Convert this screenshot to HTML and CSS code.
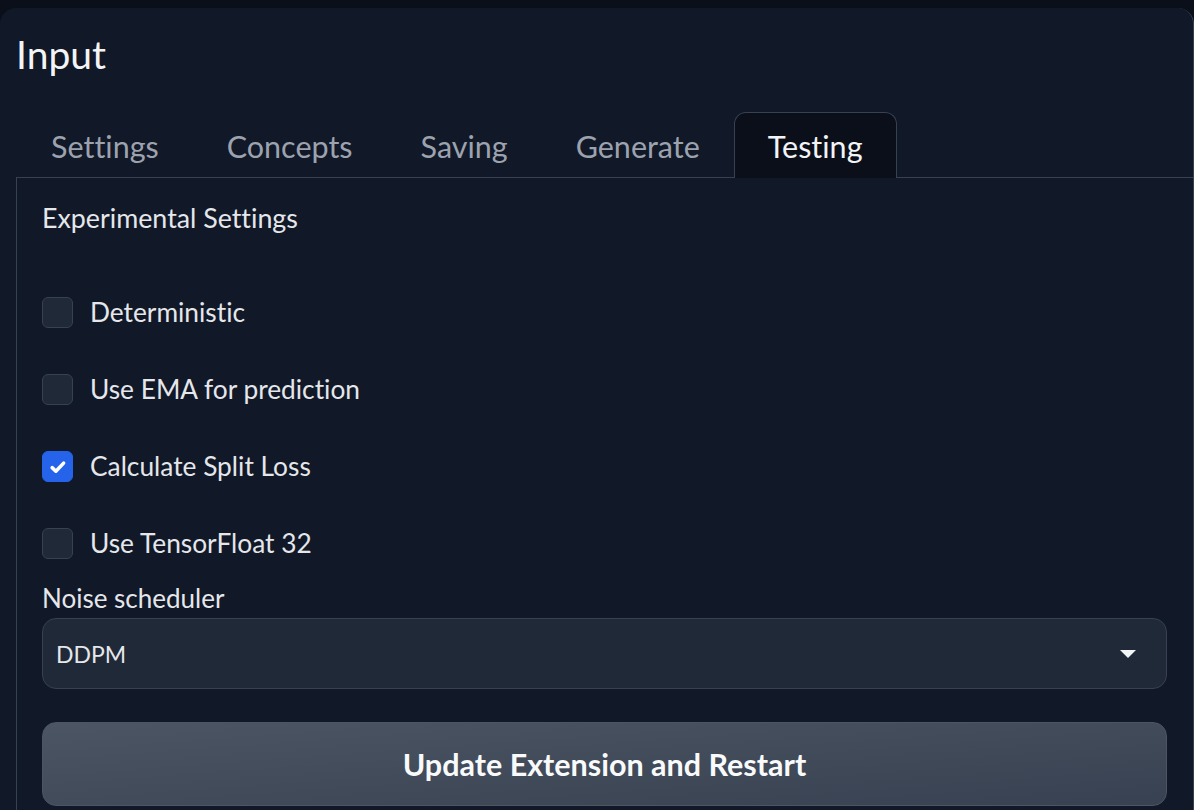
FILE: index.html
```html
<!DOCTYPE html>
<html lang="en">
<head>
    <meta charset="UTF-8">
    <meta name="viewport" content="width=device-width, initial-scale=1.0">
    <title>Input</title>
    <link rel="stylesheet" href="styles.css">
</head>
<body>
    <div class="panel">
        <h1 class="title">Input</h1>
        <div class="tabs">
            <button class="tab">Settings</button>
            <button class="tab">Concepts</button>
            <button class="tab">Saving</button>
            <button class="tab">Generate</button>
            <button class="tab active">Testing</button>
        </div>
        <div class="tab-body">
            <div class="section-title">Experimental Settings</div>
            <div class="checks">
                <label class="check"><span class="box"></span>Deterministic</label>
                <label class="check"><span class="box"></span>Use EMA for prediction</label>
                <label class="check"><span class="box checked">
                    <svg width="20" height="20" viewBox="0 0 16 16"><path d="M3.3 8.5l3 2.9 6.2-6.5" fill="none" stroke="#fff" stroke-width="2.8" stroke-linecap="round" stroke-linejoin="round"/></svg>
                </span>Calculate Split Loss</label>
                <label class="check"><span class="box"></span>Use TensorFloat 32</label>
            </div>
            <div class="field-label">Noise scheduler</div>
            <div class="dropdown">
                <span>DDPM</span>
                <span class="caret"></span>
            </div>
            <button class="update">Update Extension and Restart</button>
        </div>
    </div>
</body>
</html>
```

FILE: styles.css
```css
body {
    margin: 0;
    background: #0b0f19;
    font-family: "Lato", "Noto Sans", sans-serif;
    font-variant-ligatures: none;
    color: #e5e7eb;
    height: 810px;
    overflow: hidden;
}
.panel {
    margin-top: 8px;
    background: #111827;
    border-radius: 16px 16px 0 0;
    border-right: 1px solid #374151;
    height: 802px;
    padding-left: 16px;
}
.title {
    margin: 0;
    padding: 26px 0 0 0;
    font-size: 39px;
    font-weight: 400;
    line-height: 40px;
    color: #f3f4f6;
}
.tabs {
    display: flex;
    margin-top: 38px;
    padding-left: 1px;
}
.tab {
    font-family: inherit;
    font-variant-ligatures: none;
    font-size: 30.5px;
    color: #9ca3af;
    background: none;
    border: 1px solid transparent;
    border-bottom: none;
    padding: 0 33px;
    height: 66px;
    border-radius: 12px 12px 0 0;
    margin-bottom: -1px;
}
.tab.active {
    background: #0b0f19;
    border-color: #374151;
    color: #f3f4f6;
}
.tab-body {
    border: 1px solid #374151;
    border-right: none;
    border-bottom: none;
    padding: 24px 26px 0 25px;
    height: 640px;
}
.section-title {
    font-size: 26.8px;
    line-height: 32px;
}
.checks {
    display: flex;
    flex-direction: column;
    gap: 46px;
    margin-top: 63px;
}
.check {
    display: flex;
    align-items: center;
    gap: 17px;
    font-size: 26.3px;
    line-height: 31px;
}
.box {
    width: 29px;
    height: 29px;
    border: 1px solid #374151;
    background: #1f2937;
    border-radius: 6px;
    display: flex;
    align-items: center;
    justify-content: center;
}
.box.checked {
    background: #2563eb;
    border-color: #2563eb;
}
.field-label {
    font-size: 26px;
    line-height: 30px;
    margin-top: 24px;
}
.dropdown {
    margin-top: 5px;
    height: 69px;
    border: 1px solid #374151;
    background: #1f2937;
    border-radius: 14px;
    display: flex;
    align-items: center;
    justify-content: space-between;
    padding: 0 30px 0 13px;
    font-size: 23px;
}
.caret {
    width: 0;
    height: 0;
    border-left: 8px solid transparent;
    border-right: 8px solid transparent;
    border-top: 8px solid #f3f4f6;
}
.update {
    margin-top: 33px;
    width: 100%;
    height: 84px;
    border: 1px solid #4b5563;
    border-radius: 14px;
    background: linear-gradient(to bottom right, #4b5563, #374151);
    color: #f9fafb;
    font-family: inherit;
    font-size: 30.5px;
    font-weight: 700;
}
```
